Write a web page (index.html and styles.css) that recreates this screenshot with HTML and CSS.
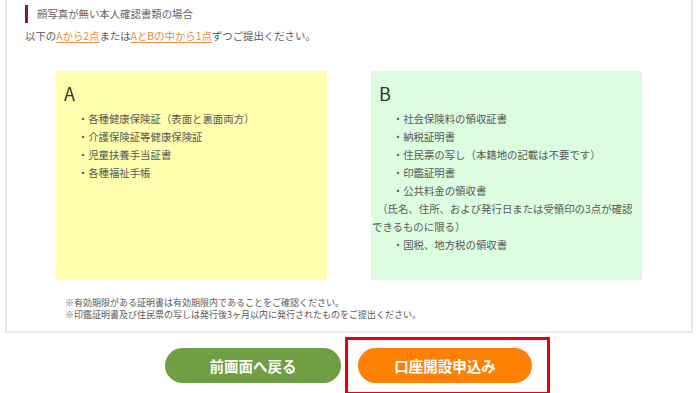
FILE: index.html
```html
<!DOCTYPE html>
<html lang="ja">
<head>
  <meta charset="UTF-8">
  <meta name="viewport" content="width=device-width, initial-scale=1.0">
  <title>本人確認書類</title>
  <link rel="stylesheet" href="styles.css">
</head>
<body>
  <!-- Document panel -->
  <div class="panel">
    <h3 class="sub-title">顔写真が無い本人確認書類の場合</h3>
    <p class="lead">以下の<span class="mark">Aから2点</span>または<span class="mark">AとBの中から1点</span>ずつご提出ください。</p>

    <div class="doc-boxes">
      <div class="doc-box box-a">
        <h4>A</h4>
        <ul>
          <li>　　・各種健康保険証（表面と裏面両方）</li>
          <li>　　・介護保険証等健康保険証</li>
          <li>　　・児童扶養手当証書</li>
          <li>　　・各種福祉手帳</li>
        </ul>
      </div>
      <div class="doc-box box-b">
        <h4>B</h4>
        <ul>
          <li>　　・社会保険料の領収証書</li>
          <li>　　・納税証明書</li>
          <li>　　・住民票の写し（本籍地の記載は不要です）</li>
          <li>　　・印鑑証明書</li>
          <li>　　・公共料金の領収書</li>
          <li>　（氏名、住所、および発行日または受領印の3点が確認できるものに限る）</li>
          <li>　　・国税、地方税の領収書</li>
        </ul>
      </div>
    </div>

    <div class="notes">
      <p>※有効期限がある証明書は有効期限内であることをご確認ください。</p>
      <p>※印鑑証明書及び住民票の写しは発行後3ヶ月以内に発行されたものをご提出ください。</p>
    </div>
  </div>

  <!-- Buttons -->
  <div class="actions">
    <button class="btn btn-back">前画面へ戻る</button>
    <span class="highlight">
      <button class="btn btn-apply">口座開設申込み</button>
    </span>
  </div>
</body>
</html>
```

FILE: styles.css
```css
body {
  margin: 0;
  width: 700px;
  height: 393px;
  overflow: hidden;
  background: #fff;
  font-family: "Noto Sans CJK JP", "Noto Sans", sans-serif;
  font-size: 10.4px;
  color: #595959;
}

/* Panel */
.panel {
  margin: 0 7px 0 5px;
  border: 2px solid #e8e8e8;
  border-top: none;
  padding: 5px 0 10px;
}

.sub-title {
  margin: 0 0 0 18px;
  padding-left: 9px;
  border-left: 3px solid #7b1c3d;
  font-size: 10.4px;
  font-weight: normal;
  line-height: 18px;
  color: #666;
}

.lead {
  margin: 4px 0 0 18px;
  line-height: 18px;
}

.mark {
  color: #f08a3c;
  text-decoration: underline;
  text-underline-offset: 2px;
}

/* A / B boxes */
.doc-boxes {
  display: grid;
  grid-template-columns: 271px 271px;
  column-gap: 44px;
  justify-content: center;
  margin-top: 26px;
}

.doc-box {
  padding: 10px 0 26px 1px;
}

.box-a {
  background-color: #ffffae;
}

.box-b {
  background-color: #dcfde0;
}

.doc-box h4 {
  margin: 0 0 5px;
  padding-left: 7px;
  font-size: 18px;
  font-weight: normal;
  line-height: 24px;
  color: #333;
}

.doc-box ul {
  margin: 0;
  padding: 0;
  list-style: none;
}

.doc-box li {
  line-height: 18px;
}

/* Notes */
.notes {
  margin: 17px 0 0 58px;
  font-size: 9px;
  line-height: 12px;
}

.notes p {
  margin: 0;
}

/* Buttons */
.actions {
  display: flex;
  justify-content: center;
  gap: 17px;
  margin-top: 15px;
  padding-right: 3px;
}

.btn {
  height: 35px;
  border: none;
  border-radius: 18px;
  color: #fff;
  font-family: "Noto Sans CJK JP", sans-serif;
  font-size: 14.5px;
  font-weight: bold;
  cursor: pointer;
}

.btn-back {
  width: 176px;
  background-color: #6f9e43;
}

.btn-apply {
  width: 174px;
  background-color: #ff8003;
}

.highlight {
  position: relative;
  display: block;
}

.highlight::after {
  content: "";
  position: absolute;
  top: -11px;
  left: -13px;
  right: -18px;
  bottom: -12px;
  border: 3px solid #e60012;
  pointer-events: none;
}
```
